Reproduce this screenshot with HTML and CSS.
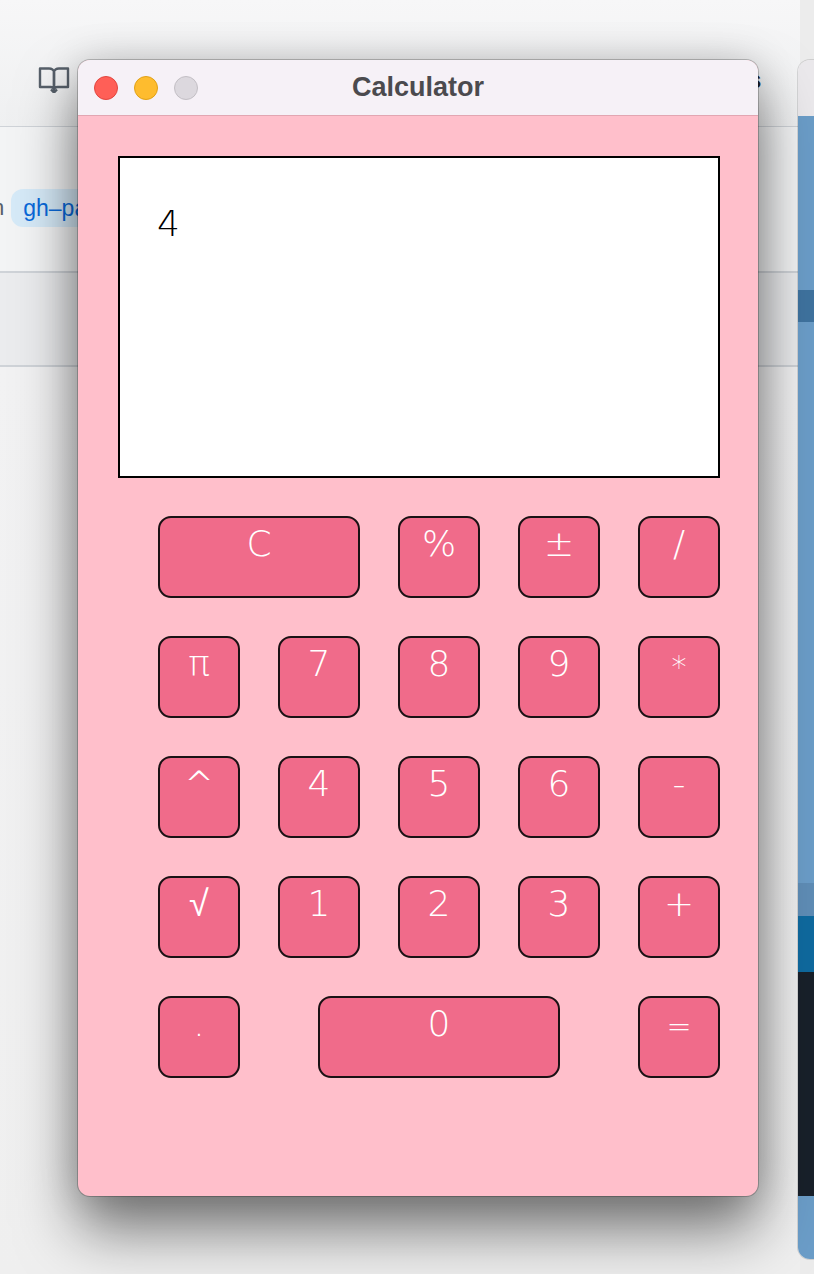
FILE: index.html
```html
<!DOCTYPE html>
<html lang="en">
<head>
<meta charset="utf-8">
<title>Calculator</title>
<link rel="stylesheet" href="styles.css">
</head>
<body>
<div class="desktop">
  <div class="browser">
    <div class="browser-top">
      <svg class="book" viewBox="0 0 32 28" width="32" height="28" aria-hidden="true">
        <path d="M2 3.5 H11 C13.5 3.5 16 5 16 7.5 V25 C16 23.2 14.5 22 12.5 22 H2 Z" fill="none" stroke="#57606a" stroke-width="2.4" stroke-linejoin="round"/>
        <path d="M30 3.5 H21 C18.5 3.5 16 5 16 7.5 V25 C16 23.2 17.5 22 19.5 22 H30 Z" fill="none" stroke="#57606a" stroke-width="2.4" stroke-linejoin="round"/>
        <path d="M13 24.5 L16 27.5 L19 24.5" fill="none" stroke="#57606a" stroke-width="2.4" stroke-linejoin="round"/>
      </svg>
      <span class="peek">s</span>
    </div>
    <div class="browser-branch">
      <span class="cut">n</span>
      <span class="chip">gh–pages</span>
    </div>
    <div class="browser-band"></div>
    <div class="browser-rest"></div>
  </div>

  <div class="side-window">
    <div class="side-title"></div>
    <div class="side-blue"></div>
    <div class="side-dark-band"></div>
    <div class="side-blue tall"></div>
    <div class="side-muted"></div>
    <div class="side-teal"></div>
    <div class="side-black"></div>
    <div class="side-blue last"></div>
  </div>

  <div class="calc-window">
    <div class="titlebar">
      <div class="lights">
        <span class="light red"></span>
        <span class="light yellow"></span>
        <span class="light gray"></span>
      </div>
      <div class="title">Calculator</div>
    </div>
    <div class="calc-body">
      <div class="display">4</div>
      <div class="keys">
        <button class="key span2">C</button>
        <button class="key">%</button>
        <button class="key">±</button>
        <button class="key">/</button>

        <button class="key">π</button>
        <button class="key">7</button>
        <button class="key">8</button>
        <button class="key">9</button>
        <button class="key small">*</button>

        <button class="key">^</button>
        <button class="key">4</button>
        <button class="key">5</button>
        <button class="key">6</button>
        <button class="key">-</button>

        <button class="key">√</button>
        <button class="key">1</button>
        <button class="key">2</button>
        <button class="key">3</button>
        <button class="key">+</button>

        <button class="key">.</button>
        <button class="key zero">0</button>
        <button class="key small">=</button>
      </div>
    </div>
  </div>
</div>
</body>
</html>
```

FILE: styles.css
```css
* { box-sizing: border-box; }

html, body {
  margin: 0;
  padding: 0;
}

body {
  width: 814px;
  height: 1274px;
  overflow: hidden;
  background: #ececec;
  font-family: "DejaVu Sans", sans-serif;
}

.desktop {
  position: relative;
  width: 814px;
  height: 1274px;
  overflow: hidden;
}

/* ---------- background browser page ---------- */
.browser {
  position: absolute;
  left: 0;
  top: 0;
  width: 800px;
  height: 1274px;
  display: flex;
  flex-direction: column;
  background: linear-gradient(180deg, #f1f1f2 0%, #e9e9e9 100%);
}

.browser-top {
  position: relative;
  height: 127px;
  border-bottom: 1px solid #cfd3d8;
  background: linear-gradient(180deg, #f7f7f8 0%, #eff0f1 100%);
  display: flex;
  align-items: flex-start;
  padding: 65px 0 0 38px;
}

.book { display: block; }

.peek {
  position: absolute;
  left: 748px;
  top: 66px;
  font-family: "Liberation Sans", sans-serif;
  font-weight: 700;
  font-size: 24px;
  color: #1f2328;
}

.browser-branch {
  height: 146px;
  border-bottom: 2px solid #cfd3d8;
  background: #f3f4f5;
  display: flex;
  align-items: flex-start;
  padding-top: 62px;
}

.cut {
  margin-left: -8px;
  font-family: "Liberation Sans", sans-serif;
  font-size: 22px;
  line-height: 38px;
  color: #57606a;
}

.chip {
  margin-left: 7px;
  height: 38px;
  padding: 0 12px;
  border-radius: 12px;
  background: #d6eaf8;
  color: #0969da;
  font-family: "Liberation Sans", sans-serif;
  font-size: 23px;
  line-height: 38px;
}

.browser-band {
  height: 94px;
  border-bottom: 2px solid #cfd3d8;
  background: #ebecee;
}

.browser-rest {
  flex: 1;
  background: linear-gradient(180deg, #f2f2f3 0%, #efefef 100%);
}

/* ---------- right partially hidden window ---------- */
.side-window {
  position: absolute;
  left: 798px;
  top: 60px;
  width: 40px;
  height: 1199px;
  border-radius: 12px 0 0 12px;
  overflow: hidden;
  display: flex;
  flex-direction: column;
  box-shadow: 0 0 0 1px rgba(0,0,0,0.12);
}

.side-title { height: 56px; background: #ebe9ec; }
.side-blue { height: 174px; background: #6b9dc8; }
.side-blue.tall { height: 561px; }
.side-blue.last { flex: 1; }
.side-dark-band { height: 32px; background: #3f739f; }
.side-muted { height: 33px; background: #5f8db6; }
.side-teal { height: 56px; background: #0f6a9f; }
.side-black { height: 224px; background: #18202a; }

/* ---------- calculator window ---------- */
.calc-window {
  position: absolute;
  left: 78px;
  top: 60px;
  width: 680px;
  height: 1136px;
  border-radius: 12px;
  overflow: hidden;
  background: #ffbfcb;
  box-shadow: 0 0 0 1px rgba(0,0,0,0.22), 0 34px 60px rgba(0,0,0,0.5), 0 0 40px rgba(0,0,0,0.16);
  display: flex;
  flex-direction: column;
}

.titlebar {
  position: relative;
  height: 56px;
  flex: none;
  background: #f6f1f7;
  border-bottom: 1px solid #e2a6b2;
  display: flex;
  align-items: center;
  justify-content: center;
}

.lights {
  position: absolute;
  left: 16px;
  top: 16px;
  display: flex;
  gap: 16px;
}

.light {
  width: 24px;
  height: 24px;
  border-radius: 50%;
  border: 1px solid transparent;
}

.light.red { background: #ff5f57; border-color: #e2463f; }
.light.yellow { background: #febc2e; border-color: #e1a116; }
.light.gray { background: #dcd8de; border-color: #c3bfc5; }

.title {
  font-family: "Liberation Sans", sans-serif;
  font-weight: 700;
  font-size: 27px;
  color: #4b4a4e;
  margin-left: 0;
  margin-top: -1px;
}

.calc-body {
  flex: 1;
  padding: 40px 38px 0 40px;
}

.display {
  width: 602px;
  height: 322px;
  border: 2px solid #000;
  background: #fff;
  padding: 45px 0 0 37px;
  font-family: "DejaVu Sans", sans-serif;
  font-weight: 200;
  font-size: 36px;
  line-height: 42px;
  color: #000;
}

.keys {
  margin: 38px 0 0 40px;
  display: grid;
  grid-template-columns: repeat(5, 82px);
  grid-auto-rows: 82px;
  gap: 38px;
}

.key {
  margin: 0;
  width: 82px;
  height: 82px;
  padding: 5px 0 0;
  border: 2px solid #1a1114;
  border-radius: 13px;
  background: #f06b8a;
  color: #fff;
  font-family: "DejaVu Sans", sans-serif;
  font-weight: 200;
  font-size: 36px;
  line-height: 42px;
  text-align: center;
  display: flex;
  justify-content: center;
  align-items: flex-start;
}

.key.small {
  font-size: 30px;
  padding-top: 8px;
}

.key.span2 {
  grid-column: span 2;
  width: 202px;
}

.key.zero {
  grid-column: span 3;
  justify-self: center;
  width: 242px;
}
```
